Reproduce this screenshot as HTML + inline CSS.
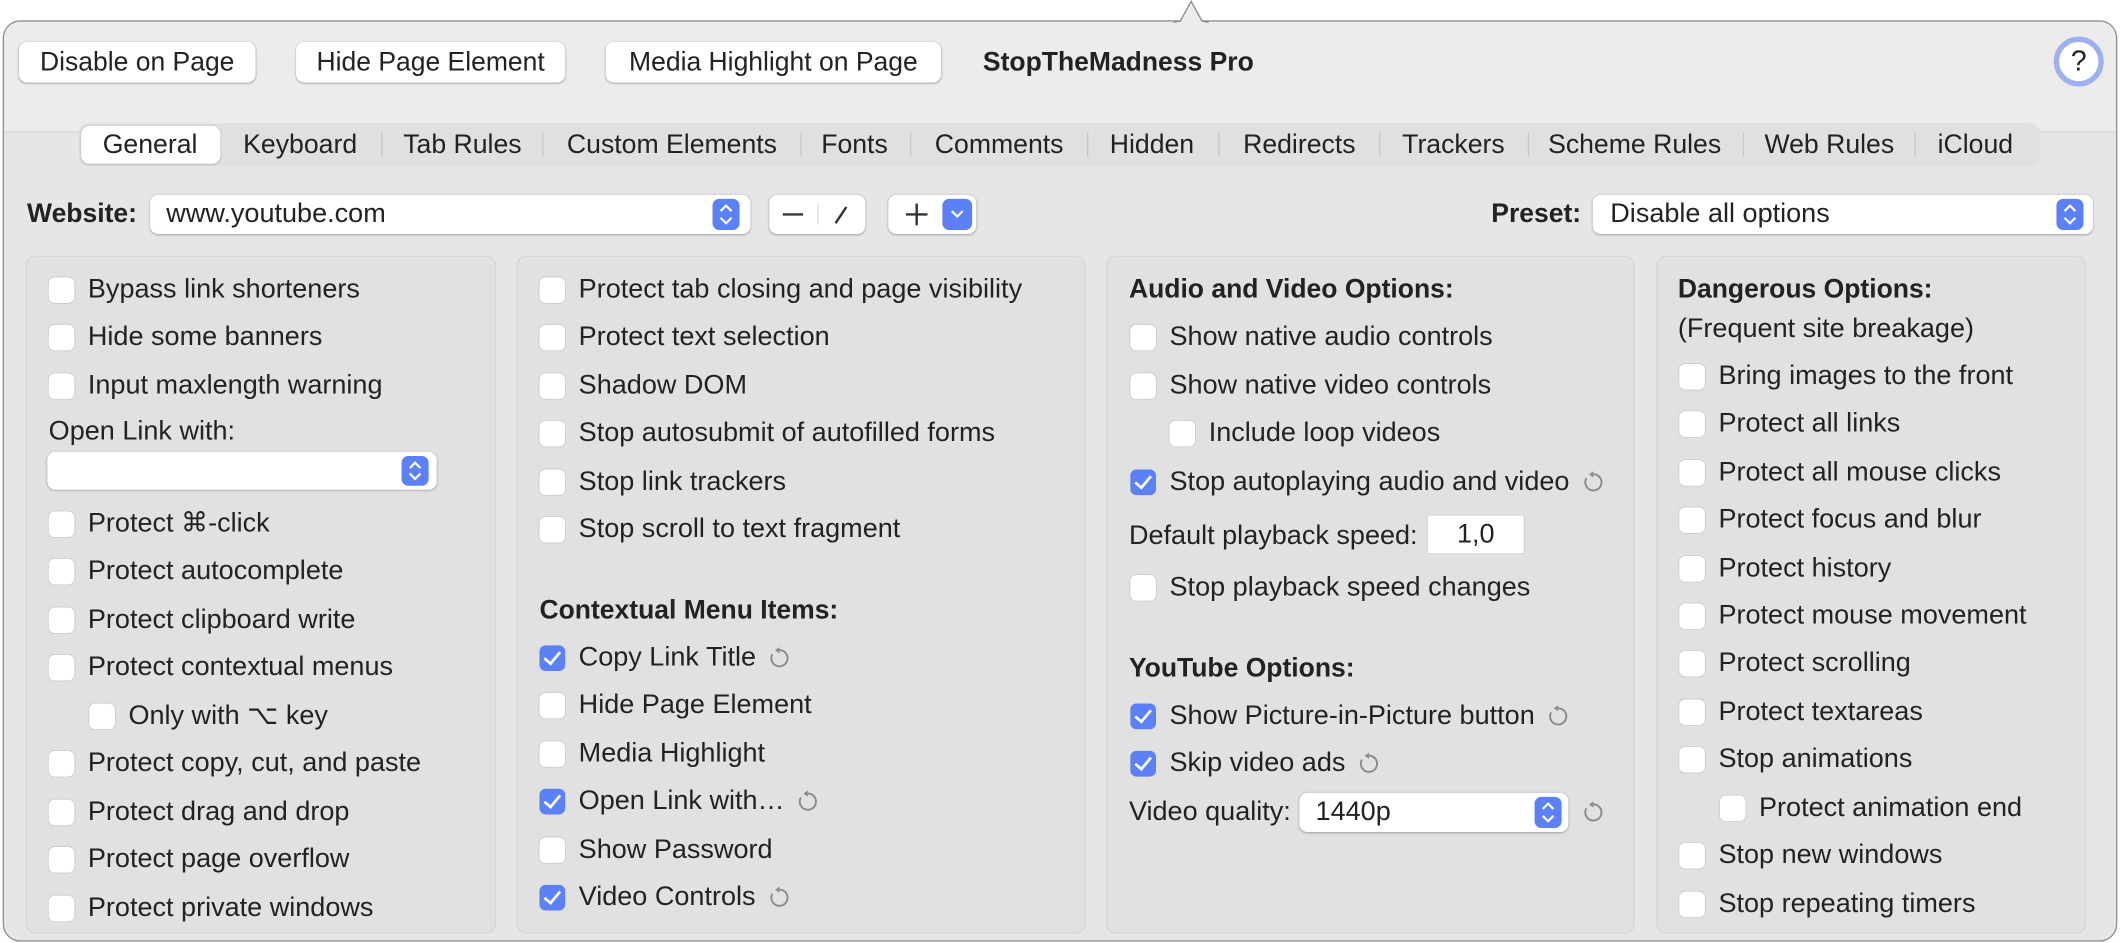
<!DOCTYPE html>
<html><head><meta charset="utf-8"><style>
html,body{margin:0;padding:0;background:#fff;overflow:hidden;width:2120px;height:943px}
#w{position:absolute;left:0;top:0;width:1568px;height:697px;transform:scale(1.35204,1.35294);transform-origin:0 0;font-family:"Liberation Sans",sans-serif;color:#222}
.pop{position:absolute;left:2px;top:15px;width:1562px;height:679px;border:1px solid #8e8e8e;border-radius:13px;background:#ececec;overflow:hidden}
.low{position:absolute;left:0;top:81px;right:0;bottom:0;background:#e6e6e6;border-top:1px solid #d8d8d8}
.btn{position:absolute;top:31px;height:30px;background:#fff;border-radius:6px;box-shadow:0 0.5px 1.5px rgba(0,0,0,.3);font-size:19.6px;line-height:30px;text-align:center}
.seg{position:absolute;left:58px;top:91px;width:1451px;height:32px;background:#e0e0e0;border-radius:8px}
.tab{position:absolute;top:94px;font-size:19.7px;line-height:26px;transform:translateX(-50%);white-space:nowrap}
.sep{position:absolute;top:98px;width:1px;height:18px;background:#c8c8c8}
.box{position:absolute;top:189px;height:501px;background:#e1e1e1;border:1px solid #d6d6d6;border-radius:7px;box-sizing:border-box}
.r{position:absolute;height:22px;line-height:22px;font-size:20px;display:flex;align-items:center;white-space:nowrap}
.cb{display:inline-block;width:19px;height:19px;border-radius:4.5px;background:#fff;box-shadow:0 0 0 .6px #c9c9c9;margin-right:10px;flex:none;position:relative}
.cb.on{background:#5b80f7;box-shadow:none}
.cb.on::after{content:"";position:absolute;left:6px;top:2px;width:5px;height:10px;border:solid #fff;border-width:0 2.4px 2.4px 0;transform:rotate(40deg)}
.b{font-weight:bold;font-size:19.6px}
.rc{width:17px;height:17px;margin-left:9px}
.pu{position:absolute;background:#fff;border-radius:6px;box-shadow:0 0.5px 1.5px rgba(0,0,0,.3);font-size:20px}
.st{position:absolute;width:20px;height:23px;background:#5b80f7;border-radius:5px;top:3px}
</style></head><body><div id="w">
<div class="pop"><div class="low"></div></div>
<svg style="position:absolute;left:868px;top:0" width="26" height="17"><path d="M0 16.5 L5 15.5 L13 1 L21 15.5 L26 16.5" fill="#ececec" stroke="#8e8e8e" stroke-width="1"/></svg>
<div class="btn" style="left:14px;width:175px">Disable on Page</div>
<div class="btn" style="left:219px;width:199px">Hide Page Element</div>
<div class="btn" style="left:448px;width:248px">Media Highlight on Page</div>
<div class="r b" style="left:727px;top:35px">StopTheMadness Pro</div>
<div style="position:absolute;left:1519px;top:27px;width:37px;height:37px;border-radius:50%;background:#fff;border:4px solid #9eb0f0;box-sizing:border-box;text-align:center;font-size:21px;line-height:29px">?</div>
<div class="seg"></div>
<div style="position:absolute;left:60px;top:93px;width:103px;height:28px;background:#fff;border-radius:6px;box-shadow:0 .5px 1.5px rgba(0,0,0,.25)"></div>
<div class="tab" style="left:111px">General</div>
<div class="tab" style="left:222px">Keyboard</div>
<div class="tab" style="left:342px">Tab Rules</div>
<div class="tab" style="left:497px">Custom Elements</div>
<div class="tab" style="left:632px">Fonts</div>
<div class="tab" style="left:739px">Comments</div>
<div class="tab" style="left:852px">Hidden</div>
<div class="tab" style="left:961px">Redirects</div>
<div class="tab" style="left:1075px">Trackers</div>
<div class="tab" style="left:1209px">Scheme Rules</div>
<div class="tab" style="left:1353px">Web Rules</div>
<div class="tab" style="left:1461px">iCloud</div>
<div class="sep" style="left:282px"></div><div class="sep" style="left:401px"></div><div class="sep" style="left:592px"></div><div class="sep" style="left:673px"></div><div class="sep" style="left:804px"></div><div class="sep" style="left:901px"></div><div class="sep" style="left:1020px"></div><div class="sep" style="left:1130px"></div><div class="sep" style="left:1289px"></div><div class="sep" style="left:1416px"></div>

<div class="r b" style="left:20px;top:147px">Website:</div>
<div class="pu" style="left:111px;top:144px;width:444px;height:29px"><span style="position:absolute;left:12px;top:3px">www.youtube.com</span><div class="st" style="left:416px"><svg width="20" height="23"><path d="M6 9l4-4 4 4M6 14l4 4 4-4" fill="none" stroke="#fff" stroke-width="1.6"/></svg></div></div>
<div class="pu" style="left:569px;top:144px;width:71px;height:29px"><svg width="71" height="29"><path d="M10 14.5h15" stroke="#333" stroke-width="1.8"/><path d="M36 7v15" stroke="#ddd"/><path d="M49 21l8-12" stroke="#333" stroke-width="1.8"/></svg></div>
<div class="pu" style="left:657px;top:144px;width:65px;height:29px"><svg width="65" height="29"><path d="M13 14.5h16M21 6.5v16" stroke="#333" stroke-width="1.8"/><rect x="40" y="3" width="22" height="23" rx="5" fill="#5b80f7"/><path d="M47 12l4 4 4-4" fill="none" stroke="#fff" stroke-width="1.6"/></svg></div>
<div class="r b" style="left:1103px;top:147px">Preset:</div>
<div class="pu" style="left:1178px;top:144px;width:370px;height:29px"><span style="position:absolute;left:13px;top:3px">Disable all options</span><div class="st" style="left:343px"><svg width="20" height="23"><path d="M6 9l4-4 4 4M6 14l4 4 4-4" fill="none" stroke="#fff" stroke-width="1.6"/></svg></div></div>

<div class="box" style="left:19px;width:348px"></div>
<div class="box" style="left:382px;width:421px"></div>
<div class="box" style="left:818px;width:391px"></div>
<div class="box" style="left:1225px;width:318px"></div>

<svg width="0" height="0" style="position:absolute"><defs><symbol id="re" viewBox="0 0 17 17"><path d="M8.5 2.5A6 6 0 1 1 3.3 5.5" fill="none" stroke="#8a8a8a" stroke-width="1.4"/><path d="M8.5 0.3v4.6l-3.2-2.3z" fill="#8a8a8a"/></symbol></defs></svg>

<div class="r" style="left:36px;top:203px"><i class="cb"></i>Bypass link shorteners</div>
<div class="r" style="left:36px;top:238px"><i class="cb"></i>Hide some banners</div>
<div class="r" style="left:36px;top:274px"><i class="cb"></i>Input maxlength warning</div>
<div class="r" style="left:36px;top:308px">Open Link with:</div>
<div class="pu" style="left:35px;top:334px;width:288px;height:28px"><div class="st" style="left:262px;top:3px;height:22px"><svg width="20" height="22"><path d="M6 9l4-4 4 4M6 13l4 4 4-4" fill="none" stroke="#fff" stroke-width="1.6"/></svg></div></div>
<div class="r" style="left:36px;top:376px"><i class="cb"></i>Protect ⌘-click</div>
<div class="r" style="left:36px;top:411px"><i class="cb"></i>Protect autocomplete</div>
<div class="r" style="left:36px;top:447px"><i class="cb"></i>Protect clipboard write</div>
<div class="r" style="left:36px;top:482px"><i class="cb"></i>Protect contextual menus</div>
<div class="r" style="left:66px;top:518px"><i class="cb"></i>Only with ⌥ key</div>
<div class="r" style="left:36px;top:553px"><i class="cb"></i>Protect copy, cut, and paste</div>
<div class="r" style="left:36px;top:589px"><i class="cb"></i>Protect drag and drop</div>
<div class="r" style="left:36px;top:624px"><i class="cb"></i>Protect page overflow</div>
<div class="r" style="left:36px;top:660px"><i class="cb"></i>Protect private windows</div>

<div class="r" style="left:399px;top:203px"><i class="cb"></i>Protect tab closing and page visibility</div>
<div class="r" style="left:399px;top:238px"><i class="cb"></i>Protect text selection</div>
<div class="r" style="left:399px;top:274px"><i class="cb"></i>Shadow DOM</div>
<div class="r" style="left:399px;top:309px"><i class="cb"></i>Stop autosubmit of autofilled forms</div>
<div class="r" style="left:399px;top:345px"><i class="cb"></i>Stop link trackers</div>
<div class="r" style="left:399px;top:380px"><i class="cb"></i>Stop scroll to text fragment</div>
<div class="r b" style="left:399px;top:440px">Contextual Menu Items:</div>
<div class="r" style="left:399px;top:475px"><i class="cb on"></i>Copy Link Title<svg class="rc"><use href="#re"/></svg></div>
<div class="r" style="left:399px;top:510px"><i class="cb"></i>Hide Page Element</div>
<div class="r" style="left:399px;top:546px"><i class="cb"></i>Media Highlight</div>
<div class="r" style="left:399px;top:581px"><i class="cb on"></i>Open Link with…<svg class="rc"><use href="#re"/></svg></div>
<div class="r" style="left:399px;top:617px"><i class="cb"></i>Show Password</div>
<div class="r" style="left:399px;top:652px"><i class="cb on"></i>Video Controls<svg class="rc"><use href="#re"/></svg></div>

<div class="r b" style="left:835px;top:203px">Audio and Video Options:</div>
<div class="r" style="left:836px;top:238px"><i class="cb"></i>Show native audio controls</div>
<div class="r" style="left:836px;top:274px"><i class="cb"></i>Show native video controls</div>
<div class="r" style="left:865px;top:309px"><i class="cb"></i>Include loop videos</div>
<div class="r" style="left:836px;top:345px"><i class="cb on"></i>Stop autoplaying audio and video<svg class="rc"><use href="#re"/></svg></div>
<div class="r" style="left:835px;top:385px">Default playback speed:</div>
<div style="position:absolute;left:1056px;top:381px;width:71px;height:28px;background:#fff;box-shadow:0 0 0 .6px #ccc;font-size:20px;line-height:28px;text-align:center">1,0</div>
<div class="r" style="left:836px;top:423px"><i class="cb"></i>Stop playback speed changes</div>
<div class="r b" style="left:835px;top:483px">YouTube Options:</div>
<div class="r" style="left:836px;top:518px"><i class="cb on"></i>Show Picture-in-Picture button<svg class="rc"><use href="#re"/></svg></div>
<div class="r" style="left:836px;top:553px"><i class="cb on"></i>Skip video ads<svg class="rc"><use href="#re"/></svg></div>
<div class="r" style="left:835px;top:589px">Video quality:</div>
<div class="pu" style="left:961px;top:586px;width:199px;height:29px"><span style="position:absolute;left:12px;top:3px">1440p</span><div class="st" style="left:174px"><svg width="20" height="23"><path d="M6 9l4-4 4 4M6 14l4 4 4-4" fill="none" stroke="#fff" stroke-width="1.6"/></svg></div></div>
<svg class="rc" style="position:absolute;left:1161px;top:592px"><use href="#re"/></svg>

<div class="r b" style="left:1241px;top:203px">Dangerous Options:</div>
<div class="r" style="left:1241px;top:232px">(Frequent site breakage)</div>
<div class="r" style="left:1242px;top:267px"><i class="cb"></i>Bring images to the front</div>
<div class="r" style="left:1242px;top:302px"><i class="cb"></i>Protect all links</div>
<div class="r" style="left:1242px;top:338px"><i class="cb"></i>Protect all mouse clicks</div>
<div class="r" style="left:1242px;top:373px"><i class="cb"></i>Protect focus and blur</div>
<div class="r" style="left:1242px;top:409px"><i class="cb"></i>Protect history</div>
<div class="r" style="left:1242px;top:444px"><i class="cb"></i>Protect mouse movement</div>
<div class="r" style="left:1242px;top:479px"><i class="cb"></i>Protect scrolling</div>
<div class="r" style="left:1242px;top:515px"><i class="cb"></i>Protect textareas</div>
<div class="r" style="left:1242px;top:550px"><i class="cb"></i>Stop animations</div>
<div class="r" style="left:1272px;top:586px"><i class="cb"></i>Protect animation end</div>
<div class="r" style="left:1242px;top:621px"><i class="cb"></i>Stop new windows</div>
<div class="r" style="left:1242px;top:657px"><i class="cb"></i>Stop repeating timers</div>
</div></body></html>
